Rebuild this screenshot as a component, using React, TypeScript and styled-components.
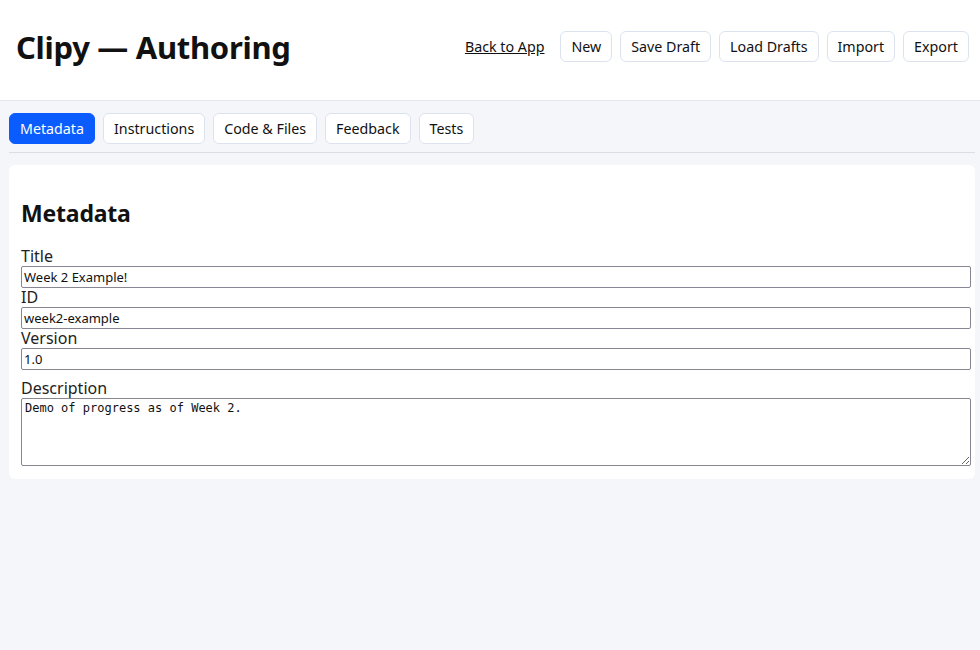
import React from 'react'
import styled, { createGlobalStyle } from 'styled-components'

const GlobalStyle = createGlobalStyle`
  html, body {
    margin: 0;
    padding: 0;
    background: #f5f6fa;
    font-family: 'Noto Sans', 'DejaVu Sans', sans-serif;
    color: #111;
  }
  * { box-sizing: border-box; }
`

const Header = styled.header`
  height: 101px;
  background: #fff;
  border-bottom: 1px solid #e3e6ec;
  display: flex;
  align-items: center;
  justify-content: space-between;
  padding: 0 11px 0 16px;
`

const Title = styled.h1`
  margin: 0;
  font-size: 31px;
  font-weight: 700;
  letter-spacing: -0.3px;
  color: #111;
  padding-bottom: 6px;
`

const Actions = styled.nav`
  display: flex;
  align-items: center;
  gap: 8px;
  padding-bottom: 8px;
`

const BackLink = styled.a`
  font-size: 14.25px;
  color: #111;
  text-decoration: underline;
  margin-right: 8px;
  cursor: pointer;
`

const Button = styled.button<{ $active?: boolean }>`
  height: 31px;
  padding: 0 10px;
  font-family: inherit;
  font-size: 14.25px;
  color: ${(p) => (p.$active ? '#fff' : '#111')};
  background: ${(p) => (p.$active ? '#0b5cff' : '#fff')};
  border: 1px solid ${(p) => (p.$active ? '#0b5cff' : '#dce3ef')};
  border-radius: 6px;
  cursor: pointer;
`

const Main = styled.main`
  padding: 12px 5px 0 9px;
`

const Tabs = styled.div`
  display: flex;
  gap: 8px;
  padding-bottom: 8px;
  border-bottom: 1px solid #dadde3;
`

const Card = styled.section`
  margin-top: 12px;
  background: #fff;
  border-radius: 6px;
  padding: 12px 4px 13px 12px;
`

const SectionHeading = styled.h2`
  margin: 20px 0 18px;
  font-size: 23px;
  font-weight: 700;
  letter-spacing: -0.2px;
`

const Field = styled.label<{ $gap?: number }>`
  display: block;
  margin-top: ${(p) => p.$gap ?? 0}px;
`

const LabelText = styled.div`
  font-size: 16px;
  line-height: 18px;
  color: #222;
  padding-bottom: 1px;
`

const TextInput = styled.input`
  display: block;
  width: 100%;
  height: 22px;
  padding: 1px 2px;
  font-family: inherit;
  font-size: 13px;
  color: #111;
  border: 1px solid #8a8593;
  border-radius: 2px;
  background: #fff;
`

const TextArea = styled.textarea`
  display: block;
  width: 100%;
  height: 68px;
  padding: 2px 3px;
  font-family: 'DejaVu Sans Mono', monospace;
  font-size: 12px;
  color: #111;
  border: 1px solid #8a8593;
  border-radius: 2px;
  background: #fff;
`

const TABS = ['Metadata', 'Instructions', 'Code & Files', 'Feedback', 'Tests']
const ACTIONS = ['New', 'Save Draft', 'Load Drafts', 'Import', 'Export']

const App = () => {
  return (
    <>
      <GlobalStyle />
      <Header>
        <Title>Clipy — Authoring</Title>
        <Actions>
          <BackLink>Back to App</BackLink>
          {ACTIONS.map((label) => (
            <Button key={label}>{label}</Button>
          ))}
        </Actions>
      </Header>
      <Main>
        <Tabs>
          {TABS.map((tab, i) => (
            <Button key={tab} $active={i === 0}>
              {tab}
            </Button>
          ))}
        </Tabs>
        <Card>
          <SectionHeading>Metadata</SectionHeading>
          <Field>
            <LabelText>Title</LabelText>
            <TextInput defaultValue="Week 2 Example!" />
          </Field>
          <Field>
            <LabelText>ID</LabelText>
            <TextInput defaultValue="week2-example" />
          </Field>
          <Field>
            <LabelText>Version</LabelText>
            <TextInput defaultValue="1.0" />
          </Field>
          <Field $gap={9}>
            <LabelText>Description</LabelText>
            <TextArea defaultValue="Demo of progress as of Week 2." />
          </Field>
        </Card>
      </Main>
    </>
  )
}

export default App
